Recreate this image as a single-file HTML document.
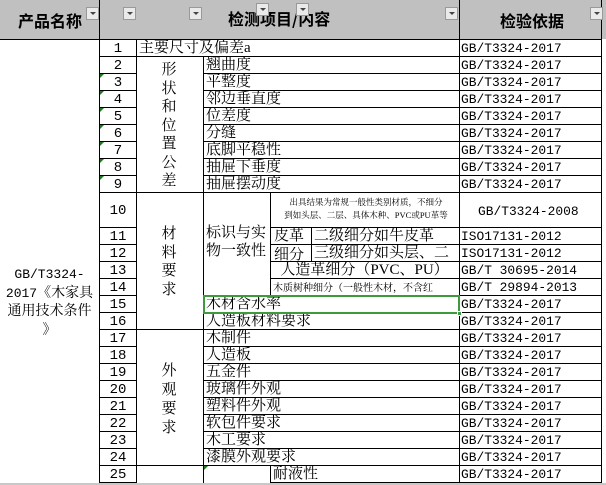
<!DOCTYPE html>
<html><head><meta charset="utf-8"><style>
*{margin:0;padding:0;box-sizing:border-box}
body{width:606px;height:485px;background:#fff;position:relative;overflow:hidden;font-family:"Liberation Serif","Noto Serif CJK SC",serif;color:#000}
.h{position:absolute;height:1px;background:#000}
.v{position:absolute;width:1px;background:#000}
.t{position:absolute;white-space:nowrap;font-size:15px;line-height:17px;height:17px;overflow:hidden;margin-top:1px}
.n{position:absolute;left:100px;width:36px;text-align:center;font-family:"Liberation Mono",monospace;font-size:14px;line-height:17px;margin-top:1px}
.g{position:absolute;left:461px;font-family:"Liberation Mono",monospace;font-size:12.9px;line-height:17px;white-space:nowrap;margin-top:1px}
.fb{position:absolute;width:13px;height:13px;background:#eaeaea;border:1px solid #999}
.fb:after{content:"";position:absolute;left:3px;top:4px;border-left:3px solid transparent;border-right:3px solid transparent;border-top:3px solid #444}
.vt{position:absolute;text-align:center;font-size:15px;font-family:"Noto Serif CJK SC",serif}
.tri{position:absolute;left:100px;width:0;height:0;border-top:4px solid #1f7a1f;border-right:4px solid transparent}
</style></head><body>
<div style="position:absolute;left:0;top:0;width:606px;height:39px;background:#c0c0c0"></div>
<div class="h" style="left:0;top:39px;width:601px"></div>
<div class="v" style="left:99px;top:0;height:485px"></div>
<div class="v" style="left:459px;top:0;height:485px"></div>
<div class="v" style="left:601px;top:0;height:483px"></div>
<div style="position:absolute;left:18px;top:11px;font-size:16px;font-weight:bold;font-family:'Noto Sans CJK SC',sans-serif;line-height:18px">产品名称</div>
<div style="position:absolute;left:228px;top:9px;font-size:16px;font-weight:bold;font-family:'Noto Sans CJK SC',sans-serif;line-height:18px">检测项目/内容</div>
<div style="position:absolute;left:500px;top:11px;font-size:16px;font-weight:bold;font-family:'Noto Sans CJK SC',sans-serif;line-height:18px">检验依据</div>
<div class="fb" style="left:86px;top:7px"></div>
<div class="fb" style="left:123px;top:7px"></div>
<div class="fb" style="left:189px;top:7px"></div>
<div class="fb" style="left:256px;top:3px"></div>
<div class="fb" style="left:296px;top:3px"></div>
<div class="fb" style="left:445px;top:7px"></div>
<div class="fb" style="left:590px;top:7px"></div>

<div class="v" style="left:136px;top:39px;height:446px"></div>
<div class="v" style="left:203px;top:56px;height:429px"></div>
<div class="v" style="left:270px;top:192px;height:103px"></div>
<div class="v" style="left:270px;top:465px;height:20px"></div>
<div class="v" style="left:311px;top:227px;height:34px"></div>

<div class="h" style="left:99px;top:56px;width:502px"></div>
<div class="h" style="left:99px;top:73px;width:37px"></div><div class="h" style="left:203px;top:73px;width:398px"></div>
<div class="h" style="left:99px;top:90px;width:37px"></div><div class="h" style="left:203px;top:90px;width:398px"></div>
<div class="h" style="left:99px;top:107px;width:37px"></div><div class="h" style="left:203px;top:107px;width:398px"></div>
<div class="h" style="left:99px;top:124px;width:37px"></div><div class="h" style="left:203px;top:124px;width:398px"></div>
<div class="h" style="left:99px;top:141px;width:37px"></div><div class="h" style="left:203px;top:141px;width:398px"></div>
<div class="h" style="left:99px;top:158px;width:37px"></div><div class="h" style="left:203px;top:158px;width:398px"></div>
<div class="h" style="left:99px;top:175px;width:37px"></div><div class="h" style="left:203px;top:175px;width:398px"></div>
<div class="h" style="left:99px;top:192px;width:502px"></div>
<div class="h" style="left:99px;top:227px;width:37px"></div><div class="h" style="left:270px;top:227px;width:331px"></div>
<div class="h" style="left:99px;top:244px;width:37px"></div><div class="h" style="left:270px;top:244px;width:331px"></div>
<div class="h" style="left:99px;top:261px;width:37px"></div><div class="h" style="left:270px;top:261px;width:331px"></div>
<div class="h" style="left:99px;top:278px;width:37px"></div><div class="h" style="left:270px;top:278px;width:331px"></div>
<div class="h" style="left:99px;top:295px;width:37px"></div><div class="h" style="left:203px;top:295px;width:398px"></div>
<div class="h" style="left:99px;top:312px;width:37px"></div><div class="h" style="left:203px;top:312px;width:398px"></div>
<div class="h" style="left:99px;top:329px;width:502px"></div>
<div class="h" style="left:99px;top:346px;width:37px"></div><div class="h" style="left:203px;top:346px;width:398px"></div>
<div class="h" style="left:99px;top:363px;width:37px"></div><div class="h" style="left:203px;top:363px;width:398px"></div>
<div class="h" style="left:99px;top:380px;width:37px"></div><div class="h" style="left:203px;top:380px;width:398px"></div>
<div class="h" style="left:99px;top:397px;width:37px"></div><div class="h" style="left:203px;top:397px;width:398px"></div>
<div class="h" style="left:99px;top:414px;width:37px"></div><div class="h" style="left:203px;top:414px;width:398px"></div>
<div class="h" style="left:99px;top:431px;width:37px"></div><div class="h" style="left:203px;top:431px;width:398px"></div>
<div class="h" style="left:99px;top:448px;width:37px"></div><div class="h" style="left:203px;top:448px;width:398px"></div>
<div class="h" style="left:99px;top:465px;width:502px"></div>
<div class="h" style="left:99px;top:482px;width:37px"></div><div class="h" style="left:270px;top:482px;width:331px"></div>
<div style="position:absolute;left:0;top:483px;width:606px;height:2px;background:#c8c8c8"></div>

<div class="tri" style="top:74px"></div><div class="tri" style="top:91px"></div><div class="tri" style="top:108px"></div><div class="tri" style="top:125px"></div><div class="tri" style="top:142px"></div><div class="tri" style="top:159px"></div><div class="tri" style="top:176px"></div>
<div class="tri" style="left:204px;top:466px"></div>

<div class="n" style="top:40px">1</div><div class="n" style="top:57px">2</div><div class="n" style="top:74px">3</div><div class="n" style="top:91px">4</div><div class="n" style="top:108px">5</div><div class="n" style="top:125px">6</div><div class="n" style="top:142px">7</div><div class="n" style="top:159px">8</div><div class="n" style="top:176px">9</div>
<div class="n" style="top:202px">10</div>
<div class="n" style="top:228px">11</div><div class="n" style="top:245px">12</div><div class="n" style="top:262px">13</div><div class="n" style="top:279px">14</div><div class="n" style="top:296px">15</div><div class="n" style="top:313px">16</div><div class="n" style="top:330px">17</div><div class="n" style="top:347px">18</div><div class="n" style="top:364px">19</div><div class="n" style="top:381px">20</div><div class="n" style="top:398px">21</div><div class="n" style="top:415px">22</div><div class="n" style="top:432px">23</div><div class="n" style="top:449px">24</div><div class="n" style="top:466px">25</div>

<div class="t" style="left:139px;top:39px">主要尺寸及偏差a</div>
<div class="t" style="left:206px;top:56px">翘曲度</div>
<div class="t" style="left:206px;top:73px">平整度</div>
<div class="t" style="left:206px;top:90px">邻边垂直度</div>
<div class="t" style="left:206px;top:107px">位差度</div>
<div class="t" style="left:206px;top:124px">分缝</div>
<div class="t" style="left:206px;top:141px">底脚平稳性</div>
<div class="t" style="left:206px;top:158px">抽屉下垂度</div>
<div class="t" style="left:206px;top:175px">抽屉摆动度</div>
<div class="vt" style="left:160px;top:60px;width:18px;line-height:18.5px">形<br>状<br>和<br>位<br>置<br>公<br>差</div>
<div class="vt" style="left:160px;top:224px;width:18px;line-height:18.5px">材<br>料<br>要<br>求</div>
<div class="vt" style="left:160px;top:360px;width:18px;line-height:19px">外<br>观<br>要<br>求</div>
<div style="position:absolute;left:206px;top:224px;font-size:15px;line-height:18px">标识与实<br>物一致性</div>
<div style="position:absolute;left:273px;top:196px;font-size:8.5px;line-height:13px;width:186px;text-align:center;white-space:nowrap;overflow:hidden">出具结果为常规一般性类别材质，不细分<br>到如头层、二层、具体木种、PVC或PU革等</div>
<div class="t" style="left:274px;top:227px">皮革</div>
<div class="t" style="left:274px;top:246px">细分</div>
<div class="t" style="left:314px;top:227px;width:144px">二级细分如牛皮革</div>
<div class="t" style="left:314px;top:244px;width:144px">三级细分如头层、二</div>
<div class="t" style="left:270px;top:261px;width:189px;text-align:center">人造革细分（PVC、PU）</div>
<div class="t" style="left:273px;top:279px;width:185px;font-size:10px">木质树种细分（一般性木材，不含红</div>
<div class="t" style="left:206px;top:295px">木材含水率</div>
<div class="t" style="left:206px;top:312px">人造板材料要求</div>
<div class="t" style="left:206px;top:329px">木制件</div>
<div class="t" style="left:206px;top:346px">人造板</div>
<div class="t" style="left:206px;top:363px">五金件</div>
<div class="t" style="left:206px;top:380px">玻璃件外观</div>
<div class="t" style="left:206px;top:397px">塑料件外观</div>
<div class="t" style="left:206px;top:414px">软包件要求</div>
<div class="t" style="left:206px;top:431px">木工要求</div>
<div class="t" style="left:206px;top:448px">漆膜外观要求</div>
<div class="t" style="left:273px;top:465px">耐液性</div>

<div style="position:absolute;left:203px;top:295px;width:257px;height:19px;border:2px solid #3f9a3f"></div>
<div style="position:absolute;left:457px;top:311px;width:5px;height:5px;background:#3f9a3f;border:1px solid #fff"></div>

<div class="g" style="top:39px">GB/T3324-2017</div><div class="g" style="top:56px">GB/T3324-2017</div><div class="g" style="top:73px">GB/T3324-2017</div><div class="g" style="top:90px">GB/T3324-2017</div><div class="g" style="top:107px">GB/T3324-2017</div><div class="g" style="top:124px">GB/T3324-2017</div><div class="g" style="top:141px">GB/T3324-2017</div><div class="g" style="top:158px">GB/T3324-2017</div><div class="g" style="top:175px">GB/T3324-2017</div>
<div class="g" style="top:202px;left:478px">GB/T3324-2008</div>
<div class="g" style="top:227px">ISO17131-2012</div><div class="g" style="top:244px">ISO17131-2012</div>
<div class="g" style="top:261px">GB/T 30695-2014</div><div class="g" style="top:278px">GB/T 29894-2013</div>
<div class="g" style="top:295px">GB/T3324-2017</div><div class="g" style="top:312px">GB/T3324-2017</div><div class="g" style="top:329px">GB/T3324-2017</div><div class="g" style="top:346px">GB/T3324-2017</div><div class="g" style="top:363px">GB/T3324-2017</div><div class="g" style="top:380px">GB/T3324-2017</div><div class="g" style="top:397px">GB/T3324-2017</div><div class="g" style="top:414px">GB/T3324-2017</div><div class="g" style="top:431px">GB/T3324-2017</div><div class="g" style="top:448px">GB/T3324-2017</div><div class="g" style="top:465px">GB/T3324-2017</div>

<div style="position:absolute;left:0;top:266px;width:99px;text-align:center;font-size:14px;line-height:18.5px"><span style="font-family:'Liberation Mono',monospace;font-size:13px">GB/T3324-</span><br><span style="font-family:'Liberation Mono',monospace;font-size:13px">2017</span>《木家具<br>通用技术条件<br>》</div>
</body></html>
